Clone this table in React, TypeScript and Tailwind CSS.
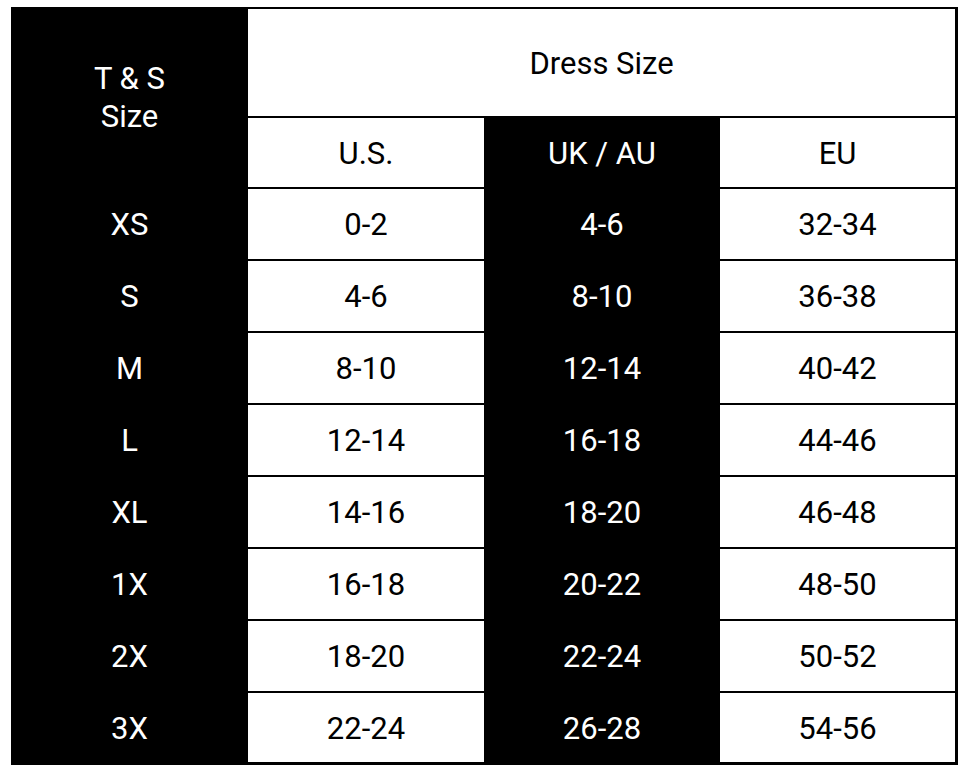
const rows = [
  ["XS", "0-2", "4-6", "32-34"],
  ["S", "4-6", "8-10", "36-38"],
  ["M", "8-10", "12-14", "40-42"],
  ["L", "12-14", "16-18", "44-46"],
  ["XL", "14-16", "18-20", "46-48"],
  ["1X", "16-18", "20-22", "48-50"],
  ["2X", "18-20", "22-24", "50-52"],
  ["3X", "22-24", "26-28", "54-56"],
];

export default function App() {
  return (
    <div className="w-[964px] h-[770px] bg-white pt-[7px] pl-[11px] font-['Roboto',sans-serif] text-[31px]">
      <div className="w-[947px] border-t-2 border-r-[3px] border-b-[3px] border-black">
        <div className="grid grid-cols-[237px_236px_236px_235px]">
          {/* 표 머리 */}
          <div className="row-span-2 bg-black text-white flex items-center justify-center text-center leading-[38px] pb-[2px]">
            T &amp; S
            <br />
            Size
          </div>
          <div className="col-span-3 h-[109px] pt-[3px] border-b-2 border-black flex items-center justify-center text-black">
            Dress Size
          </div>
          <div className="h-[71px] pt-[3px] border-b-2 border-black flex items-center justify-center text-black">U.S.</div>
          <div className="h-[71px] pt-[3px] border-b-2 border-black bg-black flex items-center justify-center text-white">UK / AU</div>
          <div className="h-[71px] pt-[3px] border-b-2 border-black flex items-center justify-center text-black">EU</div>

          {/* 사이즈 행 */}
          {rows.map((r, i) => {
            const last = i === rows.length - 1;
            const h = last ? "h-[69px] pt-[3px]" : "h-[72px] pt-[3px] border-b-2 border-black";
            return [
              <div key={i + "a"} className={`${h} bg-black text-white flex items-center justify-center`}>{r[0]}</div>,
              <div key={i + "b"} className={`${h} text-black flex items-center justify-center`}>{r[1]}</div>,
              <div key={i + "c"} className={`${h} bg-black text-white flex items-center justify-center`}>{r[2]}</div>,
              <div key={i + "d"} className={`${h} text-black flex items-center justify-center`}>{r[3]}</div>,
            ];
          })}
        </div>
      </div>
    </div>
  );
}
